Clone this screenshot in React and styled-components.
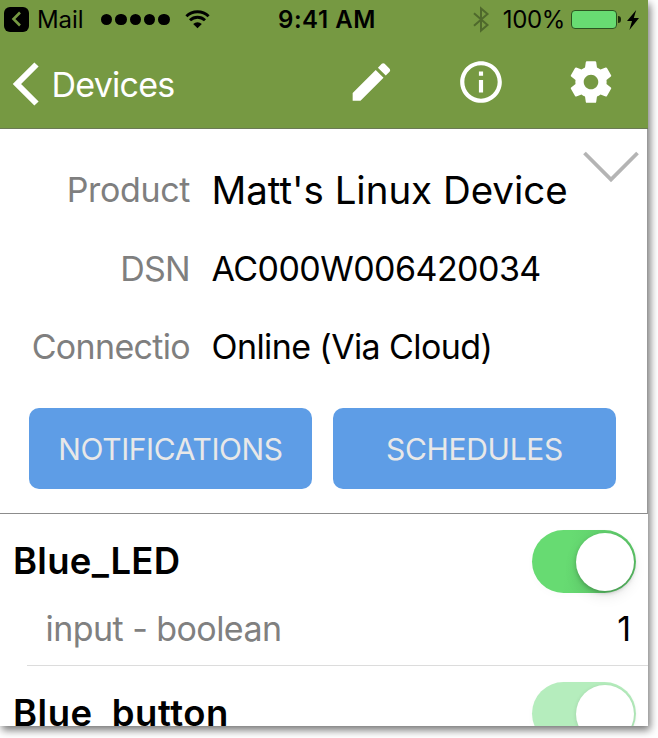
import React from "react";
import styled, { createGlobalStyle } from "styled-components";

const GlobalStyle = createGlobalStyle`
  *, *::before, *::after { box-sizing: border-box; }
  html, body { margin: 0; padding: 0; background: #fff; }
  body { width: 658px; height: 738px; overflow: hidden; font-family: Inter, "Liberation Sans", sans-serif; font-feature-settings: "calt" 0; color: #000; }
`;

const Phone = styled.main`
  display: flex;
  flex-direction: column;
  width: 648px;
  height: 726px;
  overflow: hidden;
  background: #fff;
  box-shadow: 2px 4px 8px rgba(0, 0, 0, 0.55);
`;

const Header = styled.header`
  flex: none;
  height: 129px;
  background: #769942;
  border-bottom: 1px solid #6b7a55;
`;

const Text = styled.span`
  display: block;
  white-space: nowrap;
  line-height: 1;
  font-size: ${(p) => p.$size}px;
  font-weight: ${(p) => p.$weight || 400};
  letter-spacing: ${(p) => p.$track || 0}px;
  color: ${(p) => p.$color || "#000"};
`;

const StatusBar = styled.div`
  display: grid;
  grid-template-columns: 278px 1fr auto;
  align-items: center;
  height: 38px;
  padding: 1px 9px 0 0;
`;

const StatusGroup = styled.div`
  display: flex;
  align-items: center;
`;

const BackApp = styled.span`
  display: grid;
  place-items: center;
  width: 25px;
  height: 25px;
  margin: 0 8px 1px 4px;
  border-radius: 6px;
  background: #000;
`;

const SignalDots = styled.span`
  display: flex;
  gap: 3px;
  margin-left: auto;
  padding-right: 15.5px;
`;

const Dot = styled.i`
  width: 11.3px;
  height: 11.3px;
  border-radius: 50%;
  background: #000;
`;

const WifiSlot = styled.span`
  display: flex;
  width: 93px;
`;

const Charge = styled(Text)`
  margin-left: 13px;
`;

const Battery = styled.span`
  width: 46px;
  height: 19.5px;
  margin-left: 6px;
  border: 1.5px solid #2c5420;
  border-radius: 4px;
  background: #68dc72;
`;

const BatteryCap = styled.span`
  width: 3px;
  height: 7px;
  margin: 0 6px 0 1px;
  border-radius: 0 3px 3px 0;
  background: #1a2a0a;
`;

const NavBar = styled.nav`
  display: flex;
  align-items: center;
  height: 90px;
  padding: 1px 32px 0 12px;
`;

const BackLink = styled.div`
  display: flex;
  align-items: center;
  gap: 12.5px;
`;

const BackLabel = styled(Text)`
  padding-top: 2px;
`;

const NavActions = styled.div`
  display: flex;
  align-items: center;
  gap: 60px;
  margin-left: auto;
  padding-bottom: 3px;
`;

const Icon = styled.svg`
  display: block;
  flex: none;
`;

const DetailsPanel = styled.section`
  flex: none;
  height: 385px;
  padding-top: 22px;
  border-right: 1px solid #999;
  border-bottom: 1px solid #8c8c8c;
`;

const DetailRow = styled.div`
  display: grid;
  grid-template-columns: 190px 1fr auto;
  column-gap: 21.5px;
  align-items: center;
  height: 78.5px;
  padding-right: 8px;
`;

const Label = styled(Text)`
  justify-self: end;
`;

const Expand = styled.span`
  align-self: start;
  margin-left: -21.5px;
`;

const ButtonRow = styled.div`
  display: grid;
  grid-template-columns: 283px 283px;
  column-gap: 21px;
  padding: 21px 0 0 29px;
`;

const ActionButton = styled.button`
  display: grid;
  place-items: center;
  height: 81px;
  padding: 1px 0 0;
  border: 0;
  border-radius: 10px;
  background: #5e9de6;
  font-family: inherit;
`;

const Property = styled.article`
  flex: none;
  padding-top: 16px;
`;

const PropertyHead = styled.div`
  display: flex;
  align-items: center;
  justify-content: space-between;
  height: 63px;
  padding: 0 12px 0 13px;
`;

const PropertyMeta = styled.div`
  display: flex;
  align-items: center;
  justify-content: space-between;
  height: 73px;
  margin-left: 27px;
  padding: 0 17px 0 18.5px;
  border-bottom: 1px solid #dcdcdc;
`;

const Toggle = styled.span`
  display: flex;
  justify-content: flex-end;
  align-items: center;
  width: 104px;
  height: 63px;
  padding-right: 2.5px;
  border-radius: 32px;
  background: ${(p) => (p.$dim ? "#b5edbd" : "linear-gradient(100deg, #67db72 35%, #5fcb6b 75%)")};
  box-shadow: 0 3px 9px rgba(0, 0, 0, 0.02);
`;

const Knob = styled.i`
  width: 58px;
  height: 58px;
  border-radius: 50%;
  background: #fff;
  box-shadow: ${(p) => (p.$dim ? "0 1px 4px rgba(0,0,0,.12)" : "0 2px 4px rgba(0,0,0,.22), 0 6px 14px rgba(0,0,0,.08)")};
`;

const details = [
  { label: "Product", value: "Matt's Linux Device", size: 38.5, labelTrack: -0.35, valueTrack: -0.03, expand: true },
  { label: "DSN", value: "AC000W006420034", size: 34, labelTrack: -0.7, valueTrack: -0.55 },
  { label: "Connectio", value: "Online (Via Cloud)", size: 34, labelTrack: -0.68, valueTrack: -0.6 },
];

function StatusIcons() {
  return (
    <StatusGroup>
      <Icon width="18" height="27" viewBox="0 0 18 27" fill="none" stroke="#4f692c" strokeWidth="2">
        <path d="M2 7.2 15.5 19 9 24.5V2.5L15.5 8 2 19.8" />
      </Icon>
      <Charge $size={24} $track={-0.35}>100%</Charge>
      <Battery />
      <BatteryCap />
      <Icon width="12" height="20" viewBox="0 0 12 20" fill="#000">
        <path d="M9.2 0 0 11h5L2.4 20 12 8H6.8z" />
      </Icon>
    </StatusGroup>
  );
}

export default function App() {
  return (
    <>
      <GlobalStyle />
      <Phone>
        <Header>
          <StatusBar>
            <StatusGroup>
              <BackApp>
                <Icon width="11" height="16" viewBox="0 0 11 16" fill="none" stroke="#769942" strokeWidth="2.6">
                  <path d="M9 1.5 2.5 8 9 14.5" />
                </Icon>
              </BackApp>
              <Text $size={24} $track={-0.1}>Mail</Text>
              <SignalDots>
                {[0, 1, 2, 3, 4].map((n) => <Dot key={n} />)}
              </SignalDots>
              <WifiSlot>
                <Icon width="25" height="19" viewBox="0 0 25 19" fill="none" stroke="#000" strokeWidth="2.9">
                  <path d="M1.4 6.3a15.8 15.8 0 0 1 22.2 0M5 10.3a10.8 10.8 0 0 1 15 0" />
                  <path d="M8.2 13.9a6.4 6.4 0 0 1 8.6 0L12.5 18.3z" fill="#000" stroke="none" />
                </Icon>
              </WifiSlot>
            </StatusGroup>
            <Text $size={24} $weight={600} $track={0.55}>9:41 AM</Text>
            <StatusIcons />
          </StatusBar>
          <NavBar>
            <BackLink>
              <Icon width="27" height="44" viewBox="0 0 27 44" fill="none" stroke="#fff" strokeWidth="6">
                <path d="M24.5 2.5 5 22l19.5 19.5" />
              </Icon>
              <BackLabel $size={34} $color="#fff" $track={-0.75}>Devices</BackLabel>
            </BackLink>
            <NavActions>
              <Icon width="50" height="50" viewBox="-0.2 0 24 24" fill="#fff">
                <path d="M3 17.25V21h3.75L17.81 9.94l-3.75-3.75L3 17.25zM20.71 7.04c.39-.39.39-1.02 0-1.41l-2.34-2.34c-.39-.39-1.02-.39-1.41 0l-1.83 1.83 3.75 3.75 1.83-1.83z" />
              </Icon>
              <Icon width="50" height="50" viewBox="0 0 24 24" fill="#fff">
                <path d="M11 7h2v2h-2zm0 4h2v6h-2zm1-9C6.48 2 2 6.48 2 12s4.48 10 10 10 10-4.48 10-10S17.52 2 12 2zm0 18c-4.41 0-8-3.59-8-8s3.59-8 8-8 8 3.59 8 8-3.59 8-8 8z" />
              </Icon>
              <Icon width="50" height="50" viewBox="0 0 24 24" fill="#fff">
                <path d="M19.43 12.98c.04-.32.07-.64.07-.98s-.03-.66-.07-.98l2.11-1.65c.19-.15.24-.42.12-.64l-2-3.46c-.12-.22-.39-.3-.61-.22l-2.49 1c-.52-.4-1.08-.73-1.69-.98l-.38-2.65C14.46 2.18 14.25 2 14 2h-4c-.25 0-.46.18-.49.42l-.38 2.65c-.61.25-1.17.59-1.69.98l-2.49-1c-.23-.09-.49 0-.61.22l-2 3.46c-.13.22-.07.49.12.64l2.11 1.65c-.04.32-.07.65-.07.98s.03.66.07.98l-2.11 1.65c-.19.15-.24.42-.12.64l2 3.46c.12.22.39.3.61.22l2.49-1c.52.4 1.08.73 1.69.98l.38 2.65c.03.24.24.42.49.42h4c.25 0 .46-.18.49-.42l.38-2.65c.61-.25 1.17-.59 1.69-.98l2.49 1c.23.09.49 0 .61-.22l2-3.46c.12-.22.07-.49-.12-.64l-2.11-1.65zM12 15.5c-1.93 0-3.5-1.57-3.5-3.5s1.57-3.5 3.5-3.5 3.5 1.57 3.5 3.5-1.57 3.5-3.5 3.5z" />
              </Icon>
            </NavActions>
          </NavBar>
        </Header>

        <DetailsPanel>
          {details.map((d) => (
            <DetailRow key={d.label}>
              <Label $size={34} $color="#7f7f7f" $track={d.labelTrack}>{d.label}</Label>
              <Text $size={d.size} $track={d.valueTrack}>{d.value}</Text>
              {d.expand && (
                <Expand>
                  <Icon width="56" height="34" viewBox="0 0 56 34" fill="none" stroke="#b4b4b4" strokeWidth="3.8">
                    <path d="M1.5 2 28 28.5 54.5 2" />
                  </Icon>
                </Expand>
              )}
            </DetailRow>
          ))}
          <ButtonRow>
            <ActionButton><Text $size={30} $color="#e8e8e8" $track={-0.4}>NOTIFICATIONS</Text></ActionButton>
            <ActionButton><Text $size={30} $color="#e8e8e8" $track={-0.3}>SCHEDULES</Text></ActionButton>
          </ButtonRow>
        </DetailsPanel>

        <Property>
          <PropertyHead>
            <Text $size={36.5} $weight={600} $track={0.3}>Blue_LED</Text>
            <Toggle><Knob /></Toggle>
          </PropertyHead>
          <PropertyMeta>
            <Text $size={34} $color="#808080" $track={-0.55}>input - boolean</Text>
            <Text $size={34}>1</Text>
          </PropertyMeta>
        </Property>
        <Property>
          <PropertyHead>
            <Text $size={36.5} $weight={600} $track={0.55}>Blue_button</Text>
            <Toggle $dim><Knob $dim /></Toggle>
          </PropertyHead>
        </Property>
      </Phone>
    </>
  );
}
